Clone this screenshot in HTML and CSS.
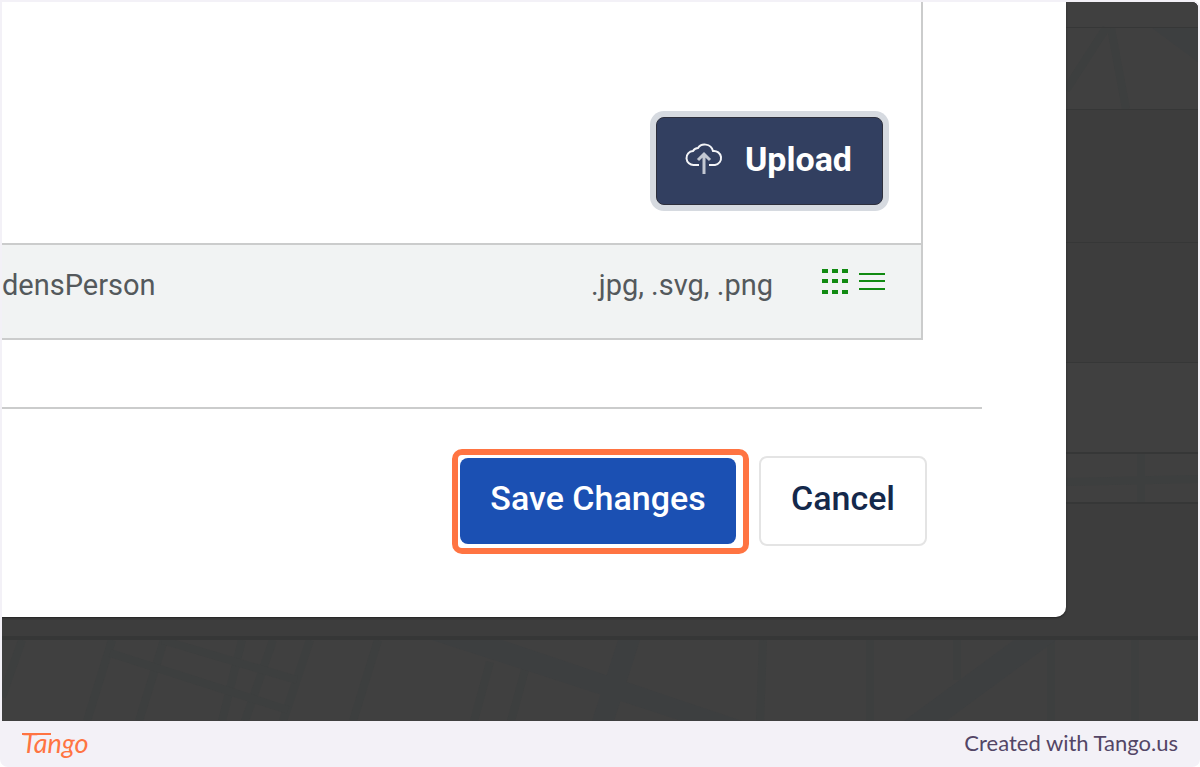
FILE: index.html
```
<!DOCTYPE html>
<html lang="en">
<head>
  <meta charset="UTF-8">
  <meta name="viewport" content="width=device-width, initial-scale=1.0">
  <title>Save Changes</title>
  <link rel="stylesheet" href="styles.css">
</head>
<body>

  <main class="screen">
    <!-- Dimmed map behind the dialog -->
    <svg class="map" viewBox="0 0 1196 719" preserveAspectRatio="xMaxYMax slice" aria-hidden="true">
      <rect width="1196" height="719" fill="#3d3d3d"/>
      <g fill="#404040">
        <rect y="0" width="1196" height="25"/>
        <rect y="26" width="1196" height="81"/>
        <rect y="360" width="1196" height="140"/>
        <rect y="638" width="1196" height="81"/>
      </g>
      <g fill="none" stroke="#3d3f3f" stroke-width="8">
        <path d="M1064 88L1104 26M1109 26l15 81M1139 451v49M1064 480l132-3"/>
        <path d="M20 638L0 695M110 638L85 719M162 638l-25 81M240 638l-20 81M271 638l-28 81M308 638l-27 81M376 638l-25 81"/>
        <path d="M108 651l178 57M160 638l135 40M488 660l-16 59M523 668l-14 51M761 638l-3 81M868 638v81M955 638v40M1049 638v81M1133 638v81"/>
      </g>
      <path d="M430 638h70l240 81h-60zM616 638h22l-26 81h-22zM1012 638h42l-110 81h-42zM1150 26h46v34z" fill="#3d3f40"/>
      <g fill="#363737">
        <rect y="25" width="1196" height="1"/>
        <rect y="107" width="1196" height="1"/>
        <rect y="240" width="1196" height="1"/>
        <rect y="360" width="1196" height="1"/>
        <rect y="450" width="1196" height="2"/>
        <rect y="500" width="1196" height="2"/>
        <rect y="634" width="1196" height="4"/>
      </g>
    </svg>

    <div class="dialog" role="dialog" aria-label="Upload files">
      <div class="panel">
        <div class="upload-area">
          <button class="btn upload-btn" type="button">
            <svg class="cloud" viewBox="0 0 38 34" aria-hidden="true">
              <path d="M14 23H9a7 7 0 0 1-1-14 6 6 0 0 1 5-3c3-5 13-5 15 3a7 7 0 0 1 2 14h-6"/>
              <path class="arrow" d="M19 32V12M13 18l6-6 6 6"/>
            </svg>
            Upload
          </button>
        </div>
        <div class="file-row">
          <span class="file-name">densPerson</span>
          <span class="file-types">.jpg, .svg, .png</span>
          <button class="view-btn" type="button" aria-label="Grid view">
            <svg viewBox="0 0 27 27" aria-hidden="true">
              <path d="M1 3h6M11 3h6M21 3h6M1 13h6M11 13h6M21 13h6M1 24h6M11 24h6M21 24h6" stroke-width="4"/>
            </svg>
          </button>
          <button class="view-btn" type="button" aria-label="List view">
            <svg viewBox="0 0 27 27" aria-hidden="true">
              <path d="M1 6h26M1 13h26M1 21h26" stroke-width="2"/>
            </svg>
          </button>
        </div>
      </div>

      <div class="actions">
        <div class="highlight">
          <button class="btn save-btn" type="button">Save Changes</button>
        </div>
        <button class="btn cancel-btn" type="button">Cancel</button>
      </div>
    </div>
  </main>

  <footer class="footer">
    <span class="brand">Tango</span>
    <span class="credit">Created with Tango.us</span>
  </footer>

</body>
</html>
```
FILE: styles.css
```
* {
  box-sizing: border-box;
}

body {
  font-family: Roboto, 'Liberation Sans', sans-serif;
  display: flex;
  flex-direction: column;
  min-height: 100vh;
  margin: 0;
  background: #fff;
}

button {
  font-family: inherit;
  cursor: pointer;
}

.screen {
  position: relative;
  flex: 1;
  display: flex;
  padding: 0 132px 104px 0;
  border: 2px solid #f3f1f7;
  border-bottom: 0;
  border-radius: 0 8px 0 0;
  overflow: hidden;
  background: #3d3d3d;
}

/* Map sits under the dialog */
.map {
  position: absolute;
  top: 0;
  left: 0;
  width: 100%;
  height: 100%;
}

.dialog {
  position: relative;
  flex: 1;
  display: flex;
  flex-direction: column;
  padding-right: 84px;
  background: #fff;
  border-radius: 0 0 10px 0;
  box-shadow: 0 1px 2px #222;
}

.panel {
  flex: 1;
  display: flex;
  flex-direction: column;
  margin: 0 59px 67px 0;
  border: solid #cbcccc;
  border-width: 0 2px 2px 0;
}

.upload-area {
  flex: 1;
  display: flex;
  justify-content: flex-end;
  align-items: flex-end;
  padding: 38px;
}

.btn {
  border-radius: 8px;
  font-size: 34px;
  font-weight: 500;
  line-height: 40px;
}

.upload-btn {
  display: flex;
  align-items: center;
  gap: 22px;
  height: 88px;
  padding: 0 30px 4px 28px;
  border: 1px solid #2d2f3c;
  background: #323f60;
  box-shadow: 0 0 0 6px #d6dae0;
  color: #fff;
  font-weight: 700;
}

.cloud {
  width: 38px;
  height: 34px;
  fill: none;
  stroke: #f3f4f7;
  stroke-width: 2;
}

.cloud .arrow {
  stroke: #c3c8d2;
  stroke-width: 3;
}

.file-row {
  display: flex;
  align-items: center;
  height: 95px;
  padding: 0 36px 14px 0;
  border-top: 2px solid #cbcccc;
  background: #f1f3f3;
  color: #54595c;
  font-size: 29px;
  line-height: 36px;
}

.file-types {
  margin-left: auto;
  margin-right: 38px;
}

.view-btn {
  width: 27px;
  height: 27px;
  margin: 0 0 6px 10px;
  padding: 0;
  border: 0;
  background: none;
}

.view-btn svg {
  display: block;
  width: 27px;
  height: 27px;
  stroke: #118a11;
}

.actions {
  display: flex;
  justify-content: flex-end;
  align-items: center;
  gap: 10px;
  padding: 40px 55px 63px 0;
  border-top: 2px solid #cbcccc;
}

.highlight {
  padding: 3px 7px 4px 2px;
  border: 6px solid #ff7442;
  border-radius: 10px;
}

.save-btn {
  display: block;
  width: 276px;
  height: 86px;
  padding: 0 0 6px;
  border: 0;
  background: #1b50b3;
  color: #fff;
}

.cancel-btn {
  width: 168px;
  height: 90px;
  margin-bottom: 2px;
  padding: 0 0 6px;
  border: 2px solid #e4e4e4;
  background: #fff;
  color: #14284b;
}

.footer {
  display: flex;
  justify-content: space-between;
  align-items: center;
  height: 46px;
  padding: 0 22px 4px;
  border-radius: 0 0 8px 8px;
  background: #f3f1f7;
  font-family: Lato, sans-serif;
}

.brand {
  position: relative;
  color: #ff7442;
  font-size: 27px;
  font-style: italic;
  font-weight: 400;
}

/* Long crossbar of the wordmark's T */
.brand::before {
  content: '';
  position: absolute;
  top: 7px;
  left: 0;
  width: 29px;
  height: 2px;
  background: #ff7442;
}

.credit {
  color: #534666;
  font-size: 22px;
}
```
